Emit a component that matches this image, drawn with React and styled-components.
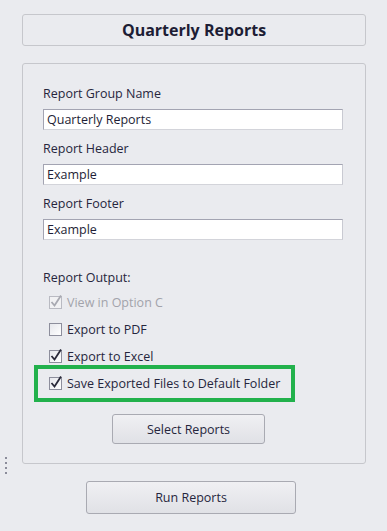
import React from "react";
import styled, { createGlobalStyle } from "styled-components";

const Global = createGlobalStyle`
  html, body { margin: 0; padding: 0; background: #eaebef; }
  body { font-family: "Open Sans", "Noto Sans", sans-serif; color: #26263d; }
  * { box-sizing: border-box; }
`;

const Page = styled.div`
  position: relative;
  width: 387px;
  height: 531px;
  padding: 14px 21px 0 22px;
  display: flex;
  flex-direction: column;
`;

const TitleBar = styled.div`
  height: 32px;
  border: 1px solid #c6c7cc;
  border-radius: 3px;
  display: flex;
  align-items: center;
  justify-content: center;
  font-size: 16px;
  font-weight: 700;
  color: #1d1d35;
`;

const Panel = styled.div`
  margin-top: 17px;
  height: 401px;
  border: 1px solid #c6c7cc;
  border-radius: 3px;
  padding: 22px 20px 0 20px;
  display: flex;
  flex-direction: column;
`;

const Label = styled.div`
  font-size: 12.5px;
  line-height: 16px;
  height: 16px;
  margin-top: ${(p) => p.$mt || 0}px;
`;

const Input = styled.input`
  margin-top: 7px;
  width: 300px;
  height: 21px;
  border: 1px solid;
  border-color: #a3a4b2 #c9cad2 #d3d4da #a3a4b2;
  background: #fff;
  font-family: inherit;
  font-size: 12.5px;
  color: #1e1e36;
  padding: 0 3px;
  outline: none;
`;

const CheckList = styled.div`
  margin-top: 6px;
  display: flex;
  flex-direction: column;
  gap: 7px;
`;

const Row = styled.label`
  display: flex;
  align-items: center;
  height: 20px;
  padding-left: 6px;
  gap: 5px;
  font-size: 12.5px;
  color: ${(p) => (p.$disabled ? "#a2a3ab" : "#26263d")};
`;

const Highlight = styled.div`
  margin-top: -8px;
  margin-left: -9px;
  width: 261px;
  border: 4px solid #22b14c;
  padding: 4px 0 5px 5px;
`;

const BoxWrap = styled.span`
  position: relative;
  width: 13px;
  height: 13px;
  flex: none;
  border: 1px solid ${(p) => (p.$disabled ? "#b9bac2" : "#8d8e9c")};
  background: ${(p) => (p.$disabled ? "#f1f1f3" : "linear-gradient(135deg, #e6e7ec, #ffffff)")};
`;

const Tick = styled.svg`
  position: absolute;
  left: 0px;
  top: -3px;
  overflow: visible;
`;

function Check({ checked, disabled }) {
  return (
    <BoxWrap $disabled={disabled}>
      {checked && (
        <Tick width="13" height="14" viewBox="0 0 13 14">
          <path
            d="M1.5 8 L4.5 11.5 L11 1.5"
            fill="none"
            stroke={disabled ? "#a8a9b1" : "#2a2a3a"}
            strokeWidth="1.8"
          />
        </Tick>
      )}
    </BoxWrap>
  );
}

const Button = styled.button`
  width: ${(p) => p.$w}px;
  height: ${(p) => p.$h}px;
  margin-left: ${(p) => p.$ml}px;
  margin-top: ${(p) => p.$mt}px;
  border: 1px solid #a9aab2;
  border-radius: 3px;
  background: linear-gradient(#f0f0f3, #e0e1e6);
  font-family: inherit;
  font-size: 12.5px;
  color: #26263d;
  padding: 0;
`;

const Grip = styled.div`
  position: absolute;
  left: 5px;
  top: 457px;
  display: flex;
  flex-direction: column;
  gap: 3px;
`;

const Dot = styled.span`
  width: 2px;
  height: 2px;
  background: #8b8c9a;
`;

export default function App() {
  return (
    <>
      <Global />
      <Page>
        <TitleBar>Quarterly Reports</TitleBar>
        <Panel>
          <Label>Report Group Name</Label>
          <Input defaultValue="Quarterly Reports" />
          <Label $mt={11}>Report Header</Label>
          <Input defaultValue="Example" />
          <Label $mt={11}>Report Footer</Label>
          <Input defaultValue="Example" />
          <Label $mt={30}>Report Output:</Label>
          <CheckList>
            <Row $disabled>
              <Check checked disabled />
              View in Option C
            </Row>
            <Row>
              <Check />
              Export to PDF
            </Row>
            <Row>
              <Check checked />
              Export to Excel
            </Row>
            <Highlight>
              <Row>
                <Check checked />
                Save Exported Files to Default Folder
              </Row>
            </Highlight>
          </CheckList>
          <Button $w={153} $h={30} $ml={69} $mt={12}>
            Select Reports
          </Button>
        </Panel>
        <Button $w={210} $h={33} $ml={64} $mt={17}>
          Run Reports
        </Button>
        <Grip>
          <Dot />
          <Dot />
          <Dot />
          <Dot />
        </Grip>
      </Page>
    </>
  );
}
